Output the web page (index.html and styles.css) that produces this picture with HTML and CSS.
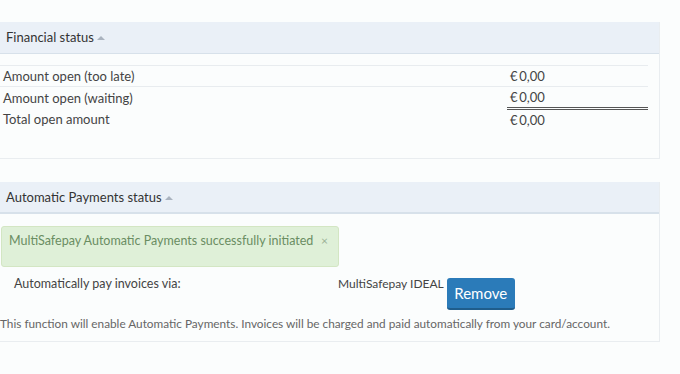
FILE: index.html
```html
<!DOCTYPE html>
<html lang="en">
<head>
    <meta charset="UTF-8">
    <title>Account status</title>
    <link rel="stylesheet" href="styles.css">
</head>
<body>
    <div class="panel">
        <div class="panel-heading thin">Financial status <span class="caret"></span></div>
        <div class="panel-body">
            <table class="amounts">
                <tr>
                    <td>Amount open (too late)</td>
                    <td class="value">&euro;&#8201;0,00</td>
                </tr>
                <tr>
                    <td>Amount open (waiting)</td>
                    <td class="value">&euro;&#8201;0,00</td>
                </tr>
                <tr class="total">
                    <td>Total open amount</td>
                    <td class="value">&euro;&#8201;0,00</td>
                </tr>
            </table>
        </div>
    </div>

    <div class="panel">
        <div class="panel-heading">Automatic Payments status <span class="caret"></span></div>
        <div class="panel-body">
            <div class="alert">
                <span>MultiSafepay Automatic Payments successfully initiated</span>
                <span class="close">&times;</span>
            </div>
            <div class="pay-row">
                <div class="pay-label">Automatically pay invoices via:</div>
                <div class="pay-value">MultiSafepay IDEAL <button class="btn">Remove</button></div>
            </div>
            <p class="note">This function will enable Automatic Payments. Invoices will be charged and paid automatically from your card/account.</p>
        </div>
    </div>
</body>
</html>
```

FILE: styles.css
```css
body {
    margin: 0;
    padding: 22px 20px 0 0;
    background-color: #fbfdfd;
    font-family: Lato, "Open Sans", sans-serif;
    font-size: 13px;
    color: #444;
}
.panel {
    border-right: 1px solid #e9edf0;
    border-bottom: 1px solid #e9edf0;
    margin-bottom: 23px;
}
.panel-heading {
    background-color: #eaf0f7;
    border-bottom: 2px solid #d7e1ea;
    height: 30px;
    line-height: 31px;
    padding-left: 6px;
    font-size: 13px;
    color: #333;
}
.panel-heading.thin {
    border-bottom-width: 1px;
    height: 31px;
}
.caret {
    display: inline-block;
    width: 0;
    height: 0;
    border-left: 4px solid transparent;
    border-right: 4px solid transparent;
    border-bottom: 4px solid #aab3bf;
    vertical-align: 2px;
}
.panel-body {
    padding-top: 11px;
}
.amounts {
    width: 648px;
    border-collapse: collapse;
    margin-bottom: 28px;
}
.amounts td {
    border-top: 1px solid #e8ecef;
    padding: 0 0 0 3px;
    height: 20px;
    line-height: 20px;
}
.amounts .value {
    width: 138px;
}
.amounts tr.total td {
    border-top: none;
}
.amounts tr.total td.value {
    border-top: 3px double #555;
}
.alert {
    margin: 1px 320px 0 1px;
    height: 41px;
    line-height: 28px;
    padding: 0 10px 0 7px;
    box-sizing: border-box;
    background-color: #dff0d8;
    border: 1px solid #d3e6c3;
    border-radius: 3px;
    color: #6a8d62;
    font-size: 12.5px;
    white-space: nowrap;
    display: flex;
    justify-content: space-between;
}
.close {
    color: #9bb296;
    font-size: 12px;
}
.pay-row {
    display: flex;
    margin-top: 9px;
    font-size: 12.5px;
}
.pay-label {
    width: 324px;
    padding-left: 14px;
}
.pay-value {
    display: flex;
    align-items: flex-start;
    gap: 3px;
    line-height: 15px;
    font-size: 12px;
}
.btn {
    margin-top: 2px;
    width: 68px;
    height: 32px;
    background-color: #2b7bb9;
    border: none;
    border-bottom: 2px solid #1f5d8c;
    border-radius: 3px;
    color: white;
    font-family: Lato, "Open Sans", sans-serif;
    font-size: 15px;
}
.note {
    margin: 6px 0 10px;
    font-size: 11.8px;
    color: #666;
}
```
